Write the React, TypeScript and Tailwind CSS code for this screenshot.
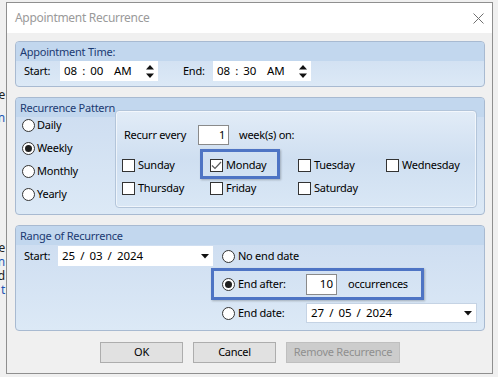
import React from 'react';

function Radio({ checked }: { checked?: boolean }) {
  return (
    <span className="flex h-[13px] w-[13px] shrink-0 items-center justify-center rounded-full border border-[#333333] bg-white">
      {checked && <span className="h-[7px] w-[7px] rounded-full bg-[#1f1f1f]" />}
    </span>
  );
}

function Check({ checked }: { checked?: boolean }) {
  return (
    <span className="flex h-[13px] w-[13px] shrink-0 items-center justify-center border border-[#333333] bg-white">
      {checked && (
        <svg width="11" height="9" viewBox="0 0 11 9">
          <path d="M1 4.5 L4 7.5 L10 1" fill="none" stroke="#5a5a5a" strokeWidth="1.2" />
        </svg>
      )}
    </span>
  );
}

function Group({
  title,
  className = '',
  children,
}: {
  title: string;
  className?: string;
  children: React.ReactNode;
}) {
  return (
    <div
      className={`w-[470px] rounded-[4px] border border-[#a8bad1] bg-gradient-to-b from-[#ccdcf0] to-[#dce9f6] ${className}`}
    >
      <div className="h-[19px] rounded-t-[3px] bg-[#c2d7ee] pl-[4px] leading-[19px] text-[#1b3a72]">
        {title}
      </div>
      {children}
    </div>
  );
}

function Spinner() {
  return (
    <svg width="8" height="15" viewBox="0 0 8 15" className="shrink-0">
      <path d="M0 5.5 L4 1 L8 5.5 Z" fill="#111" />
      <path d="M0 9.5 L8 9.5 L4 14 Z" fill="#111" />
    </svg>
  );
}

function Caret() {
  return (
    <svg width="8" height="5" viewBox="0 0 8 5" className="shrink-0">
      <path d="M0 0 L8 0 L4 4.5 Z" fill="#111" />
    </svg>
  );
}

function TimeBox({ h, m }: { h: string; m: string }) {
  return (
    <div className="flex h-[20px] w-[98px] items-center bg-white pl-[4px] text-[11.5px] tracking-normal">
      <span className="flex w-[50px] gap-[5px]">
        <span>{h}</span>
        <span>:</span>
        <span>{m}</span>
      </span>
      <span className="w-[32px]">AM</span>
      <Spinner />
    </div>
  );
}

function DateBox({ value, className = '' }: { value: string[]; className?: string }) {
  return (
    <div
      className={`flex h-[20px] items-center justify-between bg-white pl-[4px] pr-[4px] text-[11.5px] tracking-normal ${className}`}
    >
      <span className="flex gap-[5px]">
        <span>{value[0]}</span>
        <span>/</span>
        <span>{value[1]}</span>
        <span>/</span>
        <span>{value[2]}</span>
      </span>
      <Caret />
    </div>
  );
}

function CloseIcon() {
  return (
    <svg width="11" height="11" viewBox="0 0 11 11">
      <path d="M0.5 0.5 L10.5 10.5 M10.5 0.5 L0.5 10.5" stroke="#707070" strokeWidth="1" />
    </svg>
  );
}

function BehindLeft() {
  const row = 'flex h-[14px] justify-end leading-[14px]';
  return (
    <div className="flex h-full w-[6px] shrink-0 flex-col overflow-hidden pr-[1px] text-[12px]">
      <div className="h-[88px] shrink-0" />
      <div className={`${row} text-[#222]`}>e</div>
      <div className="h-[9px] shrink-0" />
      <div className={`${row} text-[#1f55b5]`}>n</div>
      <div className="h-[116px] shrink-0" />
      <div className={`${row} text-[#222]`}>e</div>
      <div className={`${row} text-[#1f55b5]`}>n</div>
      <div className={`${row} text-[#222]`}>d</div>
      <div className={`${row} text-[#1f55b5]`}>t</div>
    </div>
  );
}

const days = [
  ['Sunday', 'Monday', 'Tuesday', 'Wednesday'],
  ['Thursday', 'Friday', 'Saturday'],
];

export default function App() {
  return (
    <div className="flex h-[377px] w-[498px] overflow-hidden bg-[#f0f0f0] font-['Noto_Sans',sans-serif] text-[11px] tracking-[-0.25px] text-black">
      <BehindLeft />
      <div className="mt-[2px] flex h-[372px] w-[487px] shrink-0 flex-col border border-[#8f8f8f] bg-[#f0f0f0]">
        <div className="flex h-[30px] shrink-0 items-center justify-between bg-white pl-[8px] pr-[8px]">
          <span className="text-[12px] tracking-[-0.3px] text-[#9a9a9a]">Appointment Recurrence</span>
          <CloseIcon />
        </div>

        <div className="flex flex-1 flex-col pl-[8px] pt-[8px]">
          <Group title="Appointment Time:">
            <div className="flex h-[20px] items-center pl-[8px]">
              <span className="w-[36px]">Start:</span>
              <TimeBox h="08" m="00" />
              <span className="ml-[25px] w-[30px]">End:</span>
              <TimeBox h="08" m="30" />
            </div>
            <div className="h-[5px]" />
          </Group>

          <Group title="Recurrence Pattern" className="mt-[10px] pb-[6px]">
            <div className="-mt-[7px] flex">
              <div className="flex w-[99px] flex-col pl-[6px] pt-[4px]">
                {['Daily', 'Weekly', 'Monthly', 'Yearly'].map((r) => (
                  <div key={r} className="flex h-[23px] items-center gap-[2px]">
                    <Radio checked={r === 'Weekly'} />
                    <span>{r}</span>
                  </div>
                ))}
              </div>
              <div className="h-[98px] w-[362px] rounded-[4px] border border-[#b3c5da] bg-gradient-to-b from-[#e2ecf7] via-[#cfdff1] to-[#d9e7f5] shadow-[inset_0_0_0_1px_rgba(255,255,255,0.6)]">
                <div className="mt-[14px] flex h-[20px] items-center pl-[8px]">
                  <span className="w-[74px]">Recurr every</span>
                  <span className="flex h-[20px] w-[31px] items-center justify-end border border-[#8a8a8a] bg-white pr-[3px]">
                    1
                  </span>
                  <span className="ml-[10px]">week(s) on:</span>
                </div>
                <div className="mt-[9px] flex flex-col pl-[6px]">
                  {days.map((row, i) => (
                    <div key={i} className="flex h-[23px] items-center">
                      {row.map((d) => (
                        <div key={d} className="relative flex w-[88px] items-center gap-[3px]">
                          <Check checked={d === 'Monday'} />
                          <span>{d}</span>
                          {d === 'Monday' && (
                            <span className="absolute -left-[10px] -top-[8px] h-[30px] w-[80px] border-[3px] border-[#4e74c4] shadow-[1px_1px_2px_rgba(0,0,0,0.25)]" />
                          )}
                        </div>
                      ))}
                    </div>
                  ))}
                </div>
              </div>
            </div>
          </Group>

          <Group title="Range of Recurrence" className="mt-[10px]">
            <div className="flex">
              <div className="flex w-[197px] pl-[8px] pt-[1px]">
                <div className="flex h-[20px] items-center">
                  <span className="w-[34px]">Start:</span>
                  <DateBox value={['25', '03', '2024']} className="w-[155px]" />
                </div>
              </div>
              <div className="flex flex-col pb-[7px]">
                <div className="mt-[1px] flex h-[20px] items-center gap-[3px] pl-[9px]">
                  <Radio />
                  <span>No end date</span>
                </div>
                <div className="-ml-[2px] mt-[2px] flex h-[32px] w-[213px] items-center border-[3px] border-[#4e74c4] pl-[8px] shadow-[1px_1px_2px_rgba(0,0,0,0.25)]">
                  <div className="flex w-[84px] items-center gap-[3px]">
                    <Radio checked />
                    <span>End after:</span>
                  </div>
                  <span className="flex h-[21px] w-[31px] items-center justify-end border border-[#8a8a8a] bg-white pr-[3px] text-[11.5px] tracking-normal">
                    10
                  </span>
                  <span className="ml-[11px]">occurrences</span>
                </div>
                <div className="mt-[3px] flex h-[20px] items-center pl-[9px]">
                  <div className="flex w-[84px] items-center gap-[3px]">
                    <Radio />
                    <span>End date:</span>
                  </div>
                  <DateBox value={['27', '05', '2024']} className="w-[171px] border border-[#c5d3e4]" />
                </div>
              </div>
            </div>
          </Group>

          <div className="mt-[11px] flex gap-[10px] pl-[85px]">
            <button className="h-[21px] w-[83px] border border-[#adadad] bg-[#e1e1e1]">OK</button>
            <button className="h-[21px] w-[83px] border border-[#adadad] bg-[#e1e1e1]">Cancel</button>
            <button className="h-[21px] w-[114px] whitespace-nowrap border border-[#bfbfbf] bg-[#cccccc] text-[#8f8f8f]">
              Remove Recurrence
            </button>
          </div>
        </div>
      </div>
    </div>
  );
}
